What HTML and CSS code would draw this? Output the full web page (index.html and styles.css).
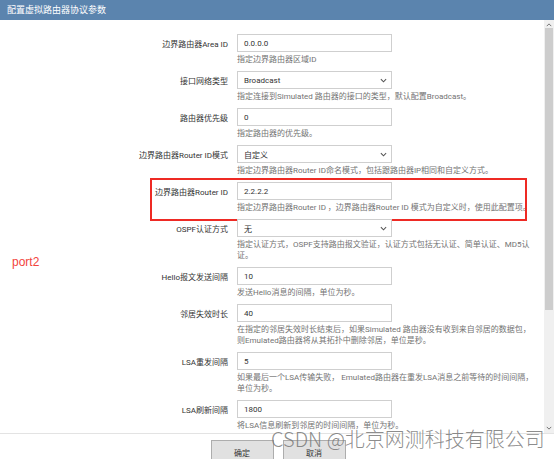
FILE: index.html
```html
<!DOCTYPE html>
<html lang="zh">
<head>
<meta charset="utf-8">
<title>配置虚拟路由器协议参数</title>
<link rel="stylesheet" href="styles.css">
</head>
<body>
<div class="dialog">
  <div class="title">配置虚拟路由器协议参数</div>
  <div class="main">
    <div class="form">
      <div class="row">
        <div class="label">边界路由器Area ID</div>
        <div class="field">
          <div class="input">0.0.0.0</div>
          <div class="help">指定边界路由器区域ID</div>
        </div>
      </div>
      <div class="row">
        <div class="label">接口网络类型</div>
        <div class="field">
          <div class="input select">Broadcast<svg class="chev" viewBox="0 0 8 5" width="7" height="5"><path d="M1 1l3 3 3-3" fill="none" stroke="#555" stroke-width="1.2"/></svg></div>
          <div class="help">指定连接到Simulated 路由器的接口的类型，默认配置Broadcast。</div>
        </div>
      </div>
      <div class="row">
        <div class="label">路由器优先级</div>
        <div class="field">
          <div class="input">0</div>
          <div class="help">指定路由器的优先级。</div>
        </div>
      </div>
      <div class="row">
        <div class="label">边界路由器Router ID模式</div>
        <div class="field">
          <div class="input select">自定义<svg class="chev" viewBox="0 0 8 5" width="7" height="5"><path d="M1 1l3 3 3-3" fill="none" stroke="#555" stroke-width="1.2"/></svg></div>
          <div class="help">指定边界路由器Router ID命名模式，包括跟路由器IP相同和自定义方式。</div>
        </div>
      </div>
      <div class="row marked">
        <div class="label">边界路由器Router ID</div>
        <div class="field">
          <div class="input">2.2.2.2</div>
          <div class="help">指定边界路由器Router ID ，边界路由器Router ID 模式为自定义时，使用此配置项。</div>
        </div>
      </div>
      <div class="row">
        <div class="label">OSPF认证方式</div>
        <div class="field">
          <div class="input select">无<svg class="chev" viewBox="0 0 8 5" width="7" height="5"><path d="M1 1l3 3 3-3" fill="none" stroke="#555" stroke-width="1.2"/></svg></div>
          <div class="help">指定认证方式，OSPF支持路由报文验证，认证方式包括无认证、简单认证、MD5认<br>证。</div>
        </div>
      </div>
      <div class="row">
        <div class="label">Hello报文发送间隔</div>
        <div class="field">
          <div class="input">10</div>
          <div class="help">发送Hello消息的间隔，单位为秒。</div>
        </div>
      </div>
      <div class="row">
        <div class="label">邻居失效时长</div>
        <div class="field">
          <div class="input">40</div>
          <div class="help">在指定的邻居失效时长结束后，如果Simulated 路由器没有收到来自邻居的数据包，<br>则Emulated路由器将从其拓扑中删除邻居，单位是秒。</div>
        </div>
      </div>
      <div class="row">
        <div class="label">LSA重发间隔</div>
        <div class="field">
          <div class="input">5</div>
          <div class="help">如果最后一个LSA传输失败， Emulated路由器在重发LSA消息之前等待的时间间隔，<br>单位为秒。</div>
        </div>
      </div>
      <div class="row">
        <div class="label">LSA刷新间隔</div>
        <div class="field">
          <div class="input">1800</div>
          <div class="help">将LSA信息刷新到邻居的时间间隔，单位为秒。</div>
        </div>
      </div>
      <div class="note">port2</div>
    </div>
    <div class="scrollbar">
      <svg class="arrow" viewBox="0 0 8 5" width="6" height="4"><path d="M1 4l3-3 3 3" fill="none" stroke="#666" stroke-width="1.2"/></svg>
      <div class="thumb"></div>
      <div class="track"></div>
      <svg class="arrow" viewBox="0 0 8 5" width="6" height="4"><path d="M1 1l3 3 3-3" fill="none" stroke="#666" stroke-width="1.2"/></svg>
    </div>
  </div>
  <div class="footer">
    <button class="btn">确定</button>
    <button class="btn">取消</button>
  </div>
  <div class="watermark">CSDN @北京网测科技有限公司</div>
</div>
</body>
</html>
```

FILE: styles.css
```css
* { box-sizing: border-box; }
html, body { margin: 0; padding: 0; }
body {
  width: 554px;
  height: 459px;
  overflow: hidden;
  background: #fff;
  font-family: Roboto, "Noto Sans CJK SC", sans-serif;
  font-size: 8px;
  color: #333;
}
.dialog {
  position: relative;
  display: flex;
  flex-direction: column;
  height: 459px;
  overflow: hidden;
}
.title {
  height: 20px;
  line-height: 20px;
  padding-left: 7px;
  background: #5b84ae;
  color: #fff;
  font-size: 9px;
  flex: none;
}
.main {
  display: flex;
  height: 413px;
  flex: none;
}
.form {
  position: relative;
  flex: 1;
  padding-top: 14px;
}
.row {
  position: relative;
  display: grid;
  grid-template-columns: 228px 1fr;
  column-gap: 9px;
  margin-bottom: 6px;
}
.label {
  height: 18px;
  display: flex;
  align-items: center;
  justify-content: flex-end;
  color: #333;
  white-space: nowrap;
}
.input {
  position: relative;
  width: 155px;
  height: 18px;
  border: 1px solid #cfcfcf;
  background: #fff;
  padding-left: 6px;
  display: flex;
  align-items: center;
  color: #333;
}
.chev {
  position: absolute;
  right: 4px;
  top: 6px;
}
.help {
  margin-top: 2px;
  line-height: 11px;
  color: #737373;
  white-space: nowrap;
}
.marked::after {
  content: "";
  position: absolute;
  left: 150px;
  top: -4px;
  width: 373px;
  height: 39px;
  border: 2px solid #ee2a24;
}
.note {
  position: absolute;
  left: 12px;
  top: 235px;
  font-family: "Liberation Sans", sans-serif;
  font-size: 12px;
  color: #f2443c;
}
.scrollbar {
  width: 10px;
  flex: none;
  background: #f0f0f0;
  display: flex;
  flex-direction: column;
  align-items: center;
  padding: 3px 0 3px;
}
.arrow { flex: none; }
.thumb {
  width: 8px;
  height: 282px;
  margin-top: 1px;
  background: #cdcdcd;
  flex: none;
}
.track { flex: 1; }
.footer {
  flex: 1;
  border-top: 1px solid #e3e3e3;
  display: flex;
  justify-content: center;
  align-items: flex-start;
  gap: 9px;
  padding-top: 6px;
  padding-left: 2px;
}
.btn {
  width: 63px;
  height: 24px;
  background: #e1e1e1;
  border: 1px solid #adadad;
  font-family: Roboto, "Noto Sans CJK SC", sans-serif;
  font-size: 8px;
  color: #333;
  padding: 0;
}
.watermark {
  position: absolute;
  left: 271px;
  top: 424px;
  font-family: "Noto Sans CJK SC", sans-serif;
  font-weight: 300;
  font-size: 20px;
  color: rgba(120, 120, 120, 0.85);
  white-space: nowrap;
  line-height: 30px;
}
```
